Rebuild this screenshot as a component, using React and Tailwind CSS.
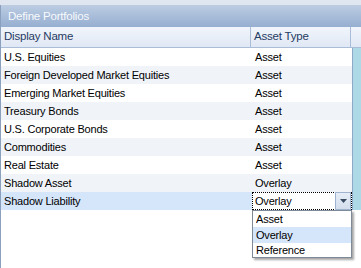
import React from "react";

const rows = [
  ["U.S. Equities", "Asset"],
  ["Foreign Developed Market Equities", "Asset"],
  ["Emerging Market Equities", "Asset"],
  ["Treasury Bonds", "Asset"],
  ["U.S. Corporate Bonds", "Asset"],
  ["Commodities", "Asset"],
  ["Real Estate", "Asset"],
  ["Shadow Asset", "Overlay"],
];

export default function App() {
  return (
    <div
      className="relative w-[361px] h-[268px] overflow-hidden bg-white text-[11px] tracking-[-0.2px] text-black"
      style={{ fontFamily: '"Liberation Sans", Arial, sans-serif' }}
    >
      <div className="h-[5px] bg-[#dfe6ef]" />
      <div className="h-[22px] flex items-center pl-[7px] pt-px text-[#f7f9fc] text-[11.5px] bg-gradient-to-b from-[#bccde3] to-[#96aed0] border-l border-[#8ba0bd]">
        Define Portfolios
      </div>
      <div className="flex flex-col border-l border-[#8ba0bd] h-[241px]">
        <div className="flex h-[21px] bg-gradient-to-b from-[#f1f5fb] to-[#e0e8f5] border-b border-[#a9bdd8] text-[#1f3b63] text-[11.5px]">
          <div className="w-[250px] flex items-center px-[3px] border-r border-[#a9bdd8]">Display Name</div>
          <div className="w-[100px] flex items-center px-[3px] border-r border-[#a9bdd8]">Asset Type</div>
          <div className="flex-1" />
        </div>
        <div className="flex">
          <div className="w-[351px] flex flex-col">
            {rows.map(([n, t], i) => (
              <div key={n} className={`flex h-[18px] ${i % 2 === 1 ? "bg-[#f0f4f9]" : "bg-white"}`}>
                <div className="w-[251px] flex items-center px-[3px]">{n}</div>
                <div className="w-[100px] flex items-center px-[3px]">{t}</div>
              </div>
            ))}
            <div className="flex h-[18px] bg-[#d5e5fa]">
              <div className="w-[251px] flex items-center px-[3px]">Shadow Liability</div>
              <div className="w-[100px] flex items-stretch bg-white border border-dotted border-black">
                <div className="flex-1 flex items-center px-[2px]">Overlay</div>
                <div className="w-[16px] my-[-1px] flex items-center justify-center bg-gradient-to-b from-[#e6edf7] to-[#d3deed] border border-[#9fb3cf]">
                  <svg width="7" height="4" viewBox="0 0 7 4">
                    <path d="M0 0H7L3.5 4Z" fill="#3a4a60" />
                  </svg>
                </div>
              </div>
            </div>
          </div>
          <div className="w-[9px] h-[162px] bg-[#add8e6] border-l border-[#8ca9c8]" />
        </div>
      </div>
      <div className="absolute left-[252px] top-[210px] w-[100px] h-[48px] bg-white border border-[#7f8a99] shadow-[2px_2px_2px_rgba(0,0,0,0.35)] flex flex-col py-px">
        <div className="h-[15px] flex items-center px-[3px]">Asset</div>
        <div className="h-[16px] flex items-center px-[3px] bg-[#d5e5fa]">Overlay</div>
        <div className="h-[15px] flex items-center px-[3px]">Reference</div>
      </div>
    </div>
  );
}
